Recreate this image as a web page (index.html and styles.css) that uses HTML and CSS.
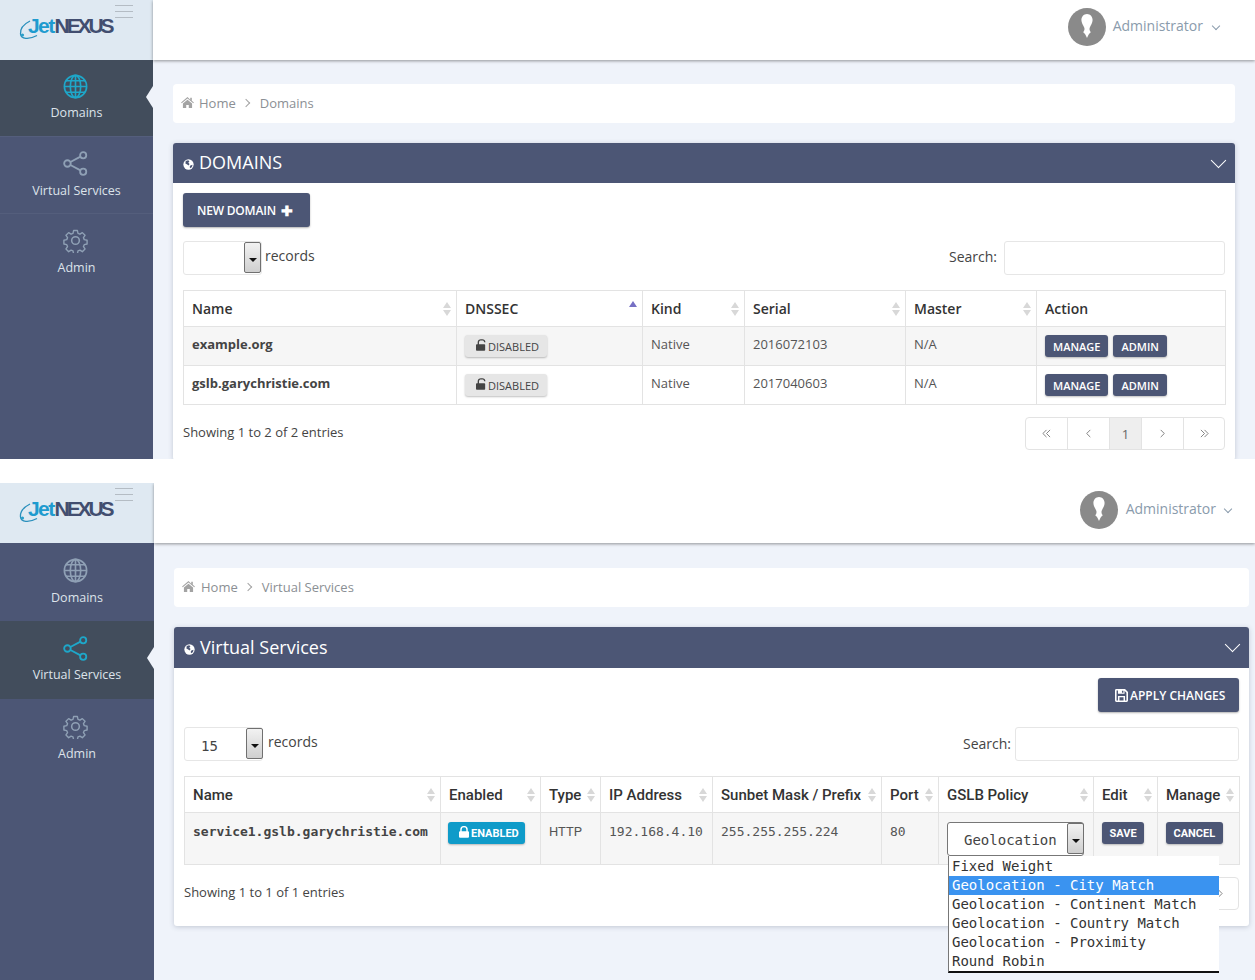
FILE: index.html
```html
<!DOCTYPE html>
<html lang="en">
<head>
<meta charset="utf-8">
<title>jetNEXUS</title>
<link rel="stylesheet" href="styles.css">
</head>
<body>
<svg class="defs" width="0" height="0" aria-hidden="true">
  <symbol id="i-globe" viewBox="0 0 26 26"><g fill="none" stroke="currentColor" stroke-width="1.7"><circle cx="13" cy="13" r="11.6"/><ellipse cx="13" cy="13" rx="5.4" ry="11.6"/><path d="M13 1.4v23.2M1.4 13h23.2M3.2 7h19.6M3.2 19h19.6"/></g></symbol>
  <symbol id="i-share" viewBox="0 0 26 26"><g fill="none" stroke="currentColor" stroke-width="1.9"><circle cx="4.6" cy="13" r="3.4"/><circle cx="21" cy="4.4" r="3.2"/><circle cx="21" cy="21.6" r="3.2"/><path d="M7.7 11.4 18.2 5.900M7.7 14.600l10.500 5.500"/></g></symbol>
  <symbol id="i-gear" viewBox="0 0 26 26"><g fill="none" stroke="currentColor" stroke-width="1.6" stroke-linejoin="round"><circle cx="13" cy="13" r="4"/><path d="M10.8 1.5h4.4l.7 3.3 2.2.9 2.8-1.8 3.1 3.1-1.8 2.8.9 2.2 3.3.7v4.4l-3.3.7-.9 2.2 1.8 2.8-3.1 3.1-2.8-1.8-2.2.9-.7 3.3h-4.4l-.7-3.3-2.2-.9-2.8 1.8-3.1-3.1 1.8-2.8-.9-2.2-3.3-.7v-4.4l3.3-.7.9-2.2-1.8-2.8 3.1-3.1 2.8 1.8 2.2-.9z" transform="translate(1.3 1.3) scale(.9)"/></g></symbol>
  <symbol id="i-home" viewBox="0 0 14 12"><path fill="currentColor" d="M7 0 0 6l.7.8L7 1.5l6.3 5.3.7-.8-2.3-2V.8H10v2.1zM2 7.2V12h3.6V8.6h2.8V12H12V7.2L7 3z"/></symbol>
  <symbol id="i-earth" viewBox="0 0 12 12"><circle cx="6" cy="6" r="5.6" fill="#fff"/><path fill="#4c5675" d="M3 2.2 5.600 1.300 7 2.400 5.800 4 7.200 5.500 6.100 7 4.600 6 2.600 4.800zM8 7l2.400-.6-.6 2.400L8 10.200 7.200 8.600z"/></symbol>
  <symbol id="i-unlock" viewBox="0 0 12 14"><path fill="currentColor" d="M3.600 6V3.700C3.600 2.300 4.700 1.500 6 1.500h1.600c1.200 0 2.100.8 2.100 2v.3h1.600v-.4C11.300 1.300 9.700 0 7.600 0H6C3.700 0 2 1.500 2 3.700V6H1a1 1 0 0 0-1 1v6a1 1 0 0 0 1 1h9a1 1 0 0 0 1-1V7a1 1 0 0 0-1-1z"/></symbol>
  <symbol id="i-lock" viewBox="0 0 12 14"><path fill="currentColor" d="M3.200 6V4.200a2.800 2.800 0 0 1 5.600 0V6zM1.500 6H1.300A1.300 1.300 0 0 0 0 7.300v5.400A1.300 1.300 0 0 0 1.300 14h9.400a1.300 1.300 0 0 0 1.300-1.300V7.300A1.300 1.300 0 0 0 10.700 6h-.2V4.200a4.500 4.500 0 0 0-9 0z"/></symbol>
  <symbol id="i-save" viewBox="0 0 14 14"><path fill="currentColor" d="M1.500 0h9.300L14 3.200v9.300a1.500 1.500 0 0 1-1.500 1.500h-11A1.500 1.500 0 0 1 0 12.500v-11A1.500 1.500 0 0 1 1.500 0zM1.700 1.700v10.600h1.500V7.500h7.600v4.800h1.500V4L10.300 1.900V5H3.200V1.700zM7.500 1.900V4h1.600V1.900zM4.800 9v3.300h4.400V9z"/></symbol>
  <symbol id="i-avatar" viewBox="0 0 38 38"><circle cx="19" cy="19" r="19" fill="#8a8a8a"/><path fill="#fff" d="M19 6c-3.400 0-5.600 2.800-5.600 6 0 3 1.800 5.200 2.800 7.600.7 1.700.2 3.300-1 4.700 1.600 1.100 2.800 3.300 3.800 5.700 1.100-2.400 2.200-4.600 3.800-5.700-1.200-1.400-1.700-3-1-4.700 1-2.400 2.800-4.600 2.800-7.600 0-3.200-2.200-6-5.600-6z"/></symbol>
  <symbol id="i-swoosh" viewBox="0 0 24 24"><path fill="none" stroke="#2a8fbc" stroke-width="1.300" d="M12 3C6 6 2 11 2.500 16c.5 5 8 6 16.500 1.500"/><circle cx="4.500" cy="17" r="1.600" fill="#2a9fc9"/></symbol>
  <symbol id="i-first" viewBox="0 0 10 10"><path fill="none" stroke="currentColor" d="M5 1 1 5l4 4M9 1 5 5l4 4"/></symbol>
  <symbol id="i-prev" viewBox="0 0 10 10"><path fill="none" stroke="currentColor" d="M7 1 3 5l4 4"/></symbol>
  <symbol id="i-next" viewBox="0 0 10 10"><path fill="none" stroke="currentColor" d="m3 1 4 4-4 4"/></symbol>
  <symbol id="i-last" viewBox="0 0 10 10"><path fill="none" stroke="currentColor" d="m1 1 4 4-4 4M5 1l4 4-4 4"/></symbol>
</svg>

<section class="shot shot-a">
  <aside class="sidebar">
    <div class="brand">
      <svg class="brand-swoosh"><use href="#i-swoosh"/></svg>
      <span class="brand-name"><span class="brand-jet">Jet</span><span class="brand-nexus">NEXUS</span></span>
      <span class="burger"><i></i><i></i><i></i></span>
    </div>
    <nav class="nav">
      <a class="nav-item is-active"><svg class="nav-icon"><use href="#i-globe"/></svg><span>Domains</span></a>
      <a class="nav-item"><svg class="nav-icon"><use href="#i-share"/></svg><span>Virtual Services</span></a>
      <a class="nav-item"><svg class="nav-icon"><use href="#i-gear"/></svg><span>Admin</span></a>
    </nav>
  </aside>
  <div class="main">
    <header class="topbar">
      <svg class="avatar"><use href="#i-avatar"/></svg>
      <span class="user">Administrator</span>
      <span class="caret-small"></span>
    </header>
    <div class="content">
      <div class="crumbs"><svg class="home"><use href="#i-home"/></svg><span>Home</span><span class="crumb-sep"></span><span>Domains</span></div>
      <div class="panel">
        <div class="panel-head">
          <svg class="earth"><use href="#i-earth"/></svg><h2>DOMAINS</h2><span class="panel-chevron"></span>
        </div>
        <div class="panel-body">
          <div class="tools tools-left"><a class="btn btn-new">NEW DOMAIN <b class="plus">✚</b></a></div>
          <div class="filters">
            <div class="length">
              <div class="select select-len"><span class="select-val"></span><span class="select-btn"></span></div>
              <span>records</span>
            </div>
            <label class="search"><span>Search:</span><span class="input input-a"></span></label>
          </div>
          <table class="grid grid-a">
            <colgroup><col class="a1"><col class="a2"><col class="a3"><col class="a4"><col class="a5"><col class="a6"></colgroup>
            <thead><tr><th class="sort">Name</th><th class="sort sort-up">DNSSEC</th><th class="sort">Kind</th><th class="sort">Serial</th><th class="sort">Master</th><th>Action</th></tr></thead>
            <tbody>
              <tr class="odd"><td class="strong">example.org</td><td><a class="btn-off"><svg class="lock"><use href="#i-unlock"/></svg>DISABLED</a></td><td>Native</td><td>2016072103</td><td>N/A</td><td class="acts"><a class="btn-sm">MANAGE</a><a class="btn-sm">ADMIN</a></td></tr>
              <tr><td class="strong">gslb.garychristie.com</td><td><a class="btn-off"><svg class="lock"><use href="#i-unlock"/></svg>DISABLED</a></td><td>Native</td><td>2017040603</td><td>N/A</td><td class="acts"><a class="btn-sm">MANAGE</a><a class="btn-sm">ADMIN</a></td></tr>
            </tbody>
          </table>
          <div class="foot">
            <span>Showing 1 to 2 of 2 entries</span>
            <div class="pager"><a class="pg-w41"><svg class="pg-icon"><use href="#i-first"/></svg></a><a class="pg-w42"><svg class="pg-icon"><use href="#i-prev"/></svg></a><a class="pg-w32 is-current">1</a><a class="pg-w42"><svg class="pg-icon"><use href="#i-next"/></svg></a><a class="pg-w41"><svg class="pg-icon"><use href="#i-last"/></svg></a></div>
          </div>
        </div>
      </div>
    </div>
  </div>
</section>

<section class="shot shot-b">
  <aside class="sidebar">
    <div class="brand">
      <svg class="brand-swoosh"><use href="#i-swoosh"/></svg>
      <span class="brand-name"><span class="brand-jet">Jet</span><span class="brand-nexus">NEXUS</span></span>
      <span class="burger"><i></i><i></i><i></i></span>
    </div>
    <nav class="nav">
      <a class="nav-item"><svg class="nav-icon"><use href="#i-globe"/></svg><span>Domains</span></a>
      <a class="nav-item is-active"><svg class="nav-icon"><use href="#i-share"/></svg><span>Virtual Services</span></a>
      <a class="nav-item"><svg class="nav-icon"><use href="#i-gear"/></svg><span>Admin</span></a>
    </nav>
  </aside>
  <div class="main">
    <header class="topbar">
      <svg class="avatar"><use href="#i-avatar"/></svg>
      <span class="user">Administrator</span>
      <span class="caret-small"></span>
    </header>
    <div class="content">
      <div class="crumbs"><svg class="home"><use href="#i-home"/></svg><span>Home</span><span class="crumb-sep"></span><span>Virtual Services</span></div>
      <div class="panel">
        <div class="panel-head">
          <svg class="earth"><use href="#i-earth"/></svg><h2>Virtual Services</h2><span class="panel-chevron"></span>
        </div>
        <div class="panel-body">
          <div class="tools tools-right"><a class="btn btn-apply"><svg class="save"><use href="#i-save"/></svg>APPLY CHANGES</a></div>
          <div class="filters">
            <div class="length">
              <div class="select select-len"><span class="select-val">15</span><span class="select-btn"></span></div>
              <span>records</span>
            </div>
            <label class="search"><span>Search:</span><span class="input input-b"></span></label>
          </div>
          <table class="grid grid-b">
            <colgroup><col class="b1"><col class="b2"><col class="b3"><col class="b4"><col class="b5"><col class="b6"><col class="b7"><col class="b8"><col class="b9"></colgroup>
            <thead><tr><th class="sort">Name</th><th class="sort">Enabled</th><th class="sort">Type</th><th class="sort">IP Address</th><th class="sort">Sunbet Mask / Prefix</th><th class="sort">Port</th><th class="sort">GSLB Policy</th><th class="sort">Edit</th><th class="sort">Manage</th></tr></thead>
            <tbody>
              <tr class="odd"><td class="strong mono txt">service1.gslb.garychristie.com</td><td><a class="btn-on"><svg class="lock"><use href="#i-lock"/></svg>ENABLED</a></td><td class="txt">HTTP</td><td class="mono txt">192.168.4.10</td><td class="mono txt">255.255.255.224</td><td class="mono txt">80</td>
                <td class="policy-cell">
                  <div class="select select-policy"><span class="select-val">Geolocation</span><span class="select-btn"></span></div>
                  <ul class="listbox">
                    <li>Fixed Weight</li>
                    <li class="is-hover">Geolocation - City Match</li>
                    <li>Geolocation - Continent Match</li>
                    <li>Geolocation - Country Match</li>
                    <li>Geolocation - Proximity</li>
                    <li>Round Robin</li>
                  </ul>
                </td>
                <td><a class="btn-sm btn-mono">SAVE</a></td><td><a class="btn-sm btn-mono">CANCEL</a></td></tr>
            </tbody>
          </table>
          <div class="foot">
            <span>Showing 1 to 1 of 1 entries</span>
            <div class="pager"><a class="pg-w41"><svg class="pg-icon"><use href="#i-first"/></svg></a><a class="pg-w42"><svg class="pg-icon"><use href="#i-prev"/></svg></a><a class="pg-w32 is-current">1</a><a class="pg-w42"><svg class="pg-icon"><use href="#i-next"/></svg></a><a class="pg-w41"><svg class="pg-icon"><use href="#i-last"/></svg></a></div>
          </div>
        </div>
      </div>
    </div>
  </div>
</section>
</body>
</html>
```
FILE: styles.css
```css
* { box-sizing: border-box; }
html, body { margin: 0; padding: 0; background: #fff; }
body { font-family: "Open Sans", "Liberation Sans", sans-serif; font-size: 13px; color: #444; width: 1255px; height: 980px; overflow: hidden; }
.defs { display: block; height: 0; }
a { text-decoration: none; }

.shot { display: grid; overflow: hidden; background: #eff3fa; }
.shot-a { grid-template-columns: 153px 1fr; height: 459px; margin-bottom: 24px; }
.shot-b { grid-template-columns: 154px 1fr; height: 497px; }

/* sidebar */
.sidebar { background: #4c5675; display: flex; flex-direction: column; }
.brand { height: 60px; background: #dfe9f2; position: relative; display: flex; align-items: flex-start; padding: 9px 0 0 20px; flex: none; }
.brand-swoosh { width: 24px; height: 24px; position: absolute; left: 18px; top: 18px; }
.brand-name { font-family: "Liberation Sans", sans-serif; font-weight: 700; font-size: 21px; line-height: 34px; letter-spacing: -1.6px; margin-left: 8px; position: relative; }
.brand-jet { color: #1f9bcf; }
.brand-nexus { color: #424e70; letter-spacing: -3.1px; margin-left: 1px; }
.burger { position: absolute; left: 115px; top: 5px; width: 18px; display: flex; flex-direction: column; gap: 5px; }
.burger i { display: block; height: 1px; background: #b4bcc4; }

.nav { display: flex; flex-direction: column; }
.nav-item { height: 77px; display: flex; flex-direction: column; align-items: center; padding-top: 14px; color: #dde3ea; border-bottom: 1px solid #545e7c; position: relative; line-height: 18px; font-size: 12.5px; }
.nav-item:last-child { border-bottom: 0; }
.shot-b .nav-item { height: 78px; padding-top: 15px; border-bottom: 0; }
.nav-icon { width: 25px; height: 25px; color: #8fa0b5; margin: 0 3px 6px 0; }
.nav-item.is-active { background: #424d5c; }
.nav-item.is-active .nav-icon { color: #1ea7c9; margin-bottom: 5px; }
.nav-item.is-active::after { content: ""; position: absolute; right: 0; top: 26px; border: 11px solid transparent; border-left-width: 0; border-right: 7px solid #eff3fa; }

/* top bar */
.main { min-width: 0; display: flex; flex-direction: column; }
.topbar { height: 60px; background: #fff; display: flex; align-items: center; justify-content: flex-end; box-shadow: 0 1px 3px rgba(0,0,0,.4); flex: none; position: relative; padding-bottom: 6px; }
.shot-a .topbar { padding-right: 36px; }
.shot-b .topbar { padding-right: 24px; }
.avatar { width: 38px; height: 38px; margin-right: 7px; }
.shot-b .avatar { margin-right: 8px; }
.user { color: #8a9bac; font-size: 14px; margin-top: -3px; }
.caret-small { width: 6px; height: 6px; border-right: 1px solid #8a9bac; border-bottom: 1px solid #8a9bac; transform: rotate(45deg); margin: -3px 0 0 9px; }
.shot-a .caret-small { margin-left: 10px; }

/* content */
.content { flex: 1; min-height: 0; }
.shot-a .content { padding: 24px 20px 0; }
.shot-b .content { padding: 25px 6px 0 20px; }
.crumbs { height: 39px; background: #fff; border-radius: 4px; display: flex; align-items: center; padding: 0 0 2px 8px; color: #8b8f94; margin-bottom: 20px; }
.home { width: 13px; height: 11px; color: #a3a3a3; margin-right: 5px; }
.shot-b .home { margin-right: 6px; }
.crumb-sep { width: 6px; height: 6px; border-top: 1px solid #a3a3a3; border-right: 1px solid #a3a3a3; transform: rotate(45deg); margin: 0 11px 0 7px; }

.panel { background: #fff; border-radius: 3px; box-shadow: 0 1px 5px rgba(60,70,100,.25); }
.panel-head { height: 40px; background: #4c5675; color: #fff; display: flex; align-items: center; padding: 0 10px; border-radius: 3px 3px 0 0; }
.shot-b .panel-head { height: 41px; }
.panel-head h2 { margin: -2px 0 0 5px; font-size: 18px; font-weight: 400; flex: 1; }
.earth { width: 11px; height: 11px; margin-top: 3px; }
.panel-chevron { width: 11px; height: 11px; border-right: 1.5px solid #fff; border-bottom: 1.5px solid #fff; transform: rotate(45deg); margin: -6px 1px 0 0; }
.panel-body { padding: 10px; }
.shot-b .panel-body { padding-bottom: 16px; }
.tools { display: flex; height: 34px; margin-bottom: 14px; }
.shot-b .tools { margin-bottom: 15px; }
.tools-right { justify-content: flex-end; }
.btn { display: inline-flex; align-items: center; height: 34px; background: #4c5675; color: #fff; font-weight: 600; font-size: 12px; border-radius: 3px; box-shadow: 0 1px 2px rgba(0,0,0,.3); }
.btn-new { width: 127px; padding-left: 14px; gap: 5px; letter-spacing: -.2px; }
.plus { font-size: 14px; letter-spacing: 0; }
.btn-apply { width: 141px; padding-left: 17px; }
.save { width: 13px; height: 13px; margin-right: 2px; }

.filters { display: flex; justify-content: space-between; height: 34px; margin-bottom: 15px; }
.length { display: flex; gap: 3px; font-size: 14px; line-height: 30px; }
.shot-b .length { gap: 5px; }
.select { display: flex; background: #fff; border: 1px solid #e6e6e6; border-radius: 3px; }
.select-len { width: 79px; height: 34px; }
.select-val { flex: 1; font-family: "DejaVu Sans Mono", monospace; font-size: 14px; padding-left: 16px; line-height: 36px; color: #444; }
.select-btn { width: 17px; margin: 0 0 1px; border: 1px solid #707070; border-radius: 2px; background: linear-gradient(#f2f2f2, #cfcfcf); position: relative; }
.shot-b .select-btn { margin-right: -1px; }
.select-btn::after { content: ""; position: absolute; left: 4px; top: 15px; border: 4px solid transparent; border-top-color: #111; border-bottom-width: 0; }
.search { display: flex; gap: 7px; line-height: 32px; font-size: 14px; }
.shot-b .search { gap: 4px; line-height: 33px; }
.input { display: block; height: 34px; background: #fff; border: 1px solid #e6e6e6; border-radius: 3px; }
.input-a { width: 221px; }
.input-b { width: 224px; }

/* tables */
.grid { width: 100%; table-layout: fixed; border-collapse: collapse; }
.grid th, .grid td { border: 1px solid #e3e3e3; padding: 0 8px; text-align: left; vertical-align: top; }
.grid th { font-size: 14px; font-weight: 600; color: #333; height: 36px; vertical-align: middle; position: relative; }
.grid-a th { padding-bottom: 1px; }
.grid td { height: 39px; padding-top: 8px; color: #555; }
.grid .odd td { background: #f6f6f6; }
.grid .strong { font-weight: 700; color: #444; }
.sort::before, .sort::after { content: ""; position: absolute; right: 5px; border: 4px solid transparent; border-left-width: 4px; }
.sort::before { top: 11px; border-top-width: 0; border-bottom: 6px solid #d8d8d8; }
.sort::after { top: 19px; border-bottom-width: 0; border-top: 6px solid #d8d8d8; }
.sort-up::before { top: 10px; border-bottom-color: #7670c4; }
.sort-up::after { display: none; }

.a1 { width: 273px; } .a2 { width: 186px; } .a3 { width: 102px; } .a4 { width: 161px; } .a5 { width: 131px; } .a6 { width: 189px; }
.b1 { width: 256px; } .b2 { width: 100px; } .b3 { width: 60px; } .b4 { width: 112px; } .b5 { width: 169px; } .b6 { width: 57px; } .b7 { width: 155px; } .b8 { width: 64px; } .b9 { width: 82px; }

.btn-off, .btn-on, .btn-sm { display: inline-flex; align-items: center; vertical-align: top; border-radius: 3px; font-size: 11px; height: 22px; box-shadow: 0 1px 2px rgba(0,0,0,.25); }
.btn-off { background: #e6e6e6; color: #444; padding: 0 8px 0 11px; }
.btn-on { background: #0f9bc9; color: #fff; padding: 0 6px 0 11px; margin-left: -1px; font-weight: 700; font-family: Roboto, sans-serif; }
.lock { width: 10px; height: 12px; margin: -3px 2px 0 0; }
.btn-sm { background: #4c5675; color: #fff; font-weight: 600; padding: 0 8px; }
.acts { white-space: nowrap; }
.acts .btn-sm + .btn-sm { margin-left: 5px; }

.grid-b th { font-family: Roboto, sans-serif; font-weight: 500; font-size: 15px; }
.grid-b td { height: 52px; padding-top: 9px; font-family: Roboto, sans-serif; font-size: 13px; }
.grid-b td.txt { padding-top: 11px; }
.grid-b .mono { font-family: "DejaVu Sans Mono", "Liberation Mono", monospace; font-size: 13px; }
.btn-mono { font-family: Roboto, sans-serif; font-weight: 700; padding: 0 7.5px; }
.policy-cell { position: relative; }
.select-policy { width: 137px; height: 34px; border-color: #777; }
.select-policy .select-val { line-height: 34px; }
.select-policy .select-btn { margin-right: -1px; }
.listbox { position: absolute; left: 9px; top: 43px; width: 271px; margin: 0; padding: 1px 0 0; list-style: none; background: #fff; border-left: 1px solid #777; border-bottom: 2px solid #111; font-family: "DejaVu Sans Mono", monospace; font-size: 14px; line-height: 19px; color: #333; z-index: 2; }
.listbox li { padding-left: 3px; white-space: nowrap; }
.listbox .is-hover { background: #3a93f0; color: #fff; }

.foot { display: flex; justify-content: space-between; align-items: flex-start; margin-top: 12px; line-height: 30px; }
.pager { display: flex; border: 1px solid #e3e3e3; border-radius: 4px; height: 33px; background: #fff; }
.pager a { display: flex; align-items: center; justify-content: center; color: #666; border-left: 1px solid #e3e3e3; font-size: 13px; }
.pager a:first-child { border-left: 0; }
.pg-icon { width: 9px; height: 9px; color: #777; }
.pg-w41 { width: 41px; }
.pg-w42 { width: 42px; }
.pg-w32 { width: 32px; }
.is-current { background: #eee; }
```
